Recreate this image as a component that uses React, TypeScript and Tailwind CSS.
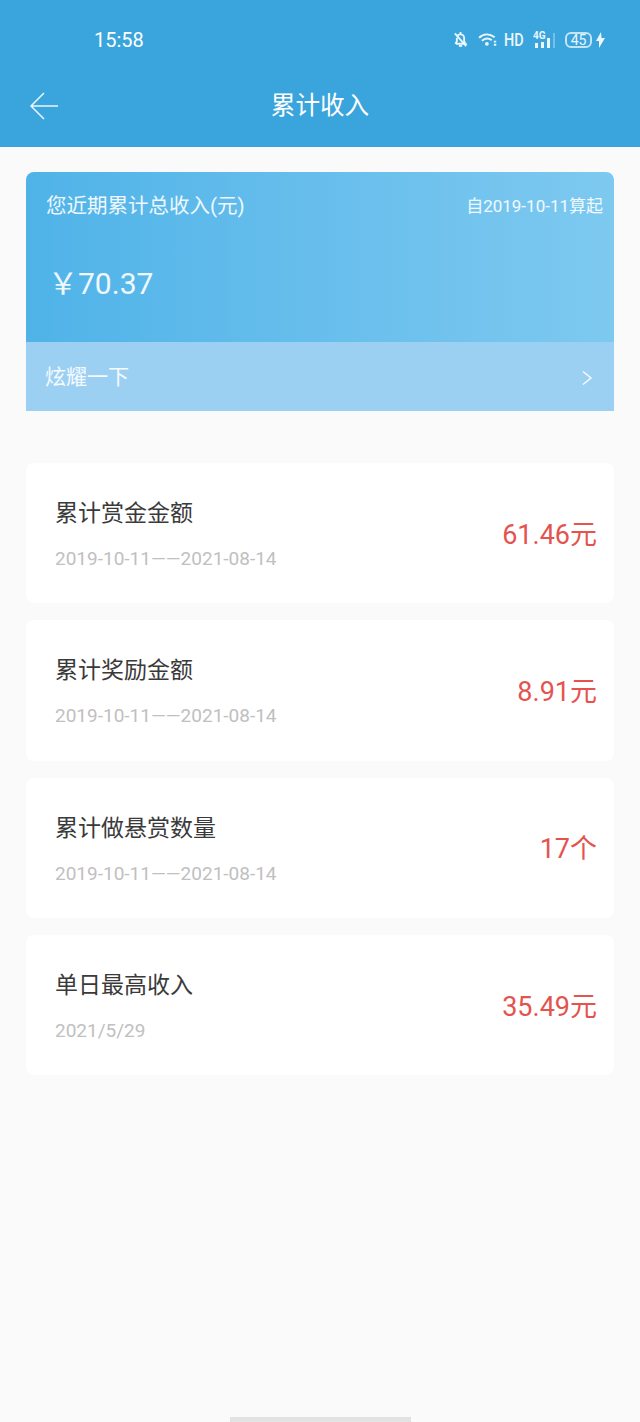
import React from 'react';

const font = { fontFamily: 'Roboto, "Noto Sans CJK SC", sans-serif' };

const stats = [
  { title: '累计赏金金额', date: '2019-10-11——2021-08-14', value: '61.46元' },
  { title: '累计奖励金额', date: '2019-10-11——2021-08-14', value: '8.91元' },
  { title: '累计做悬赏数量', date: '2019-10-11——2021-08-14', value: '17个' },
  { title: '单日最高收入', date: '2021/5/29', value: '35.49元' },
];

const StatusIcons = () => (
  <div className="flex items-center text-white/90">
    <svg width="15" height="17" viewBox="0 0 16 18" fill="none" stroke="currentColor" strokeWidth="2">
      <path d="M8 1v2" />
      <path d="M3 13.5h10.5l-1.6-2.4V7.4A3.9 3.9 0 0 0 8 3.5 3.9 3.9 0 0 0 4.6 5.4" />
      <path d="M4.1 7.2v3.9L2.5 13.5" />
      <path d="M6.3 15.8h3.4" />
      <path d="M2 2.5l12 13.5" />
    </svg>
    <svg className="ml-[10px]" width="20" height="15" viewBox="0 0 21 16" fill="none" stroke="currentColor" strokeWidth="2.2">
      <path d="M1 6.2C5.8 1.6 12.2 1.6 17.6 5.6" />
      <path d="M4 9.3C7.2 6.5 11.2 6.4 14.5 8.6" />
      <circle cx="9.3" cy="12.6" r="2" fill="currentColor" stroke="none" />
      <path d="M18 9.2v2M18 12.6v2" strokeWidth="2.6" />
    </svg>
    <span className="ml-[6px] w-[20px] text-[18px] leading-none font-medium scale-x-[0.8] origin-left">HD</span>
    <div className="relative ml-[9px] w-[21px] h-[18px]">
      <span className="absolute left-0 top-0 text-[10px] font-bold leading-none">4G</span>
      <div className="absolute left-[2px] bottom-[1px] w-[3px] h-[5px] bg-white/90" />
      <div className="absolute left-[8px] bottom-[1px] w-[3px] h-[6px] bg-white/90" />
      <div className="absolute left-[14px] bottom-[1px] w-[3px] h-[10px] bg-white/90" />
      <div className="absolute left-[20px] bottom-[1px] w-[2px] h-[15px] bg-white/30" />
    </div>
    <div className="ml-[11px] w-[27px] h-[16px] rounded-[6px] border-2 border-white/70 flex items-center justify-center text-[14px] leading-none">45</div>
    <svg className="ml-[4px]" width="9" height="16" viewBox="0 0 9 16" fill="currentColor">
      <path d="M5 0L0 9h3v7l6-10H5.5z" />
    </svg>
  </div>
);

export default function App() {
  return (
    <div className="flex flex-col h-[1422px] overflow-hidden bg-[#fafafa]" style={font}>
      <div className="h-[147px] bg-[#3aa5dc] text-white">
        <div className="h-[79px] flex items-center justify-between pl-[94px] pr-[35px]">
          <span className="text-[20px] leading-none">15:58</span>
          <StatusIcons />
        </div>
        <div className="relative flex items-center justify-center h-[54px]">
          <svg className="absolute left-[29px] top-[12px]" width="30" height="30" viewBox="0 0 30 30" fill="none" stroke="white" strokeOpacity="0.9" strokeWidth="1.5">
            <path d="M29 15H2M15 2L2 15l13 13" />
          </svg>
          <span className="text-[24.6px] leading-none">累计收入</span>
        </div>
      </div>

      <div className="flex-1 flex flex-col px-[26px] pt-[25px]">
        <div className="h-[239px] rounded-t-[8px] overflow-hidden flex flex-col text-white bg-gradient-to-r from-[#4fb3e8] to-[#7dc9f0]">
          <div className="h-[170px]">
            <div className="flex justify-between pt-[20px] pl-[20px] pr-[11px]">
              <span className="text-[20.5px] leading-[28px] text-white/90">您近期累计总收入(元)</span>
              <span className="text-[17px] leading-[28px] text-white/90">自2019-10-11算起</span>
            </div>
            <div className="pl-[22px] pt-[44px] text-[30px] leading-[40px] text-white/90">￥70.37</div>
          </div>
          <div className="flex-1 flex items-center justify-between pl-[19px] pr-[21px] pt-[2px] bg-[#9bd0f3]">
            <span className="text-[21px] leading-none text-white/90">炫耀一下</span>
            <svg width="12" height="16" viewBox="0 0 12 16" fill="none" stroke="white" strokeOpacity="0.9" strokeWidth="1.5">
              <path d="M2 1.5L10 8 2 14.5" />
            </svg>
          </div>
        </div>

        <div className="flex flex-col gap-[17px] mt-[52px]">
          {stats.map((item) => (
            <div key={item.title} className="h-[140.33px] rounded-[8px] bg-white flex items-center justify-between pl-[29px] pr-[17px] pt-[4px]">
              <div className="flex flex-col">
                <span className="text-[23px] leading-[32px] text-[#3a3a3a]">{item.title}</span>
                <span className="mt-[16px] text-[19px] leading-[26px] text-[#c0c0c0]">{item.date}</span>
              </div>
              <span className="text-[27px] leading-none text-[#e5534f]">{item.value}</span>
            </div>
          ))}
        </div>
      </div>

      <div className="flex justify-center">
        <div className="w-[181px] h-[5px] bg-[#e2e2e2]" />
      </div>
    </div>
  );
}
